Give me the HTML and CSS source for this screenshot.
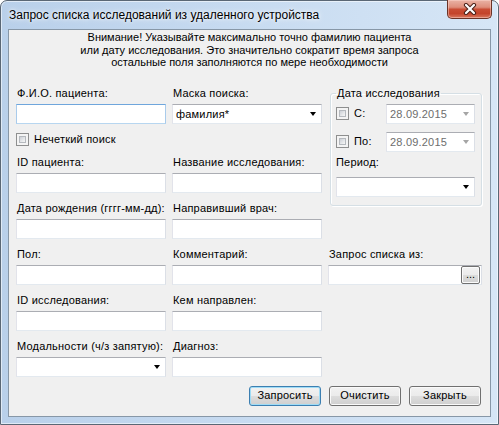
FILE: index.html
```html
<!DOCTYPE html>
<html lang="ru">
<head>
<meta charset="utf-8">
<title>Запрос списка исследований</title>
<link rel="stylesheet" href="styles.css">
</head>
<body>
<div class="window">
  <div class="titlebar">
    <span class="title">Запрос списка исследований из удаленного устройства</span>
    <div class="close">
      <svg width="14" height="12" viewBox="0 0 14 12">
        <path d="M3 2 L11 10 M11 2 L3 10" stroke="#4a2018" stroke-width="4.2" stroke-linecap="round"/>
        <path d="M3 2 L11 10 M11 2 L3 10" stroke="#ffffff" stroke-width="2.2" stroke-linecap="round"/>
      </svg>
    </div>
  </div>
  <div class="client">
    <p class="notice">Внимание! Указывайте максимально точно фамилию пациента<br>или дату исследования. Это значительно сократит время запроса<br>остальные поля заполняются по мере необходимости</p>
    <div class="form">
      <div class="field c1 rA"><span class="lbl">Ф.И.О. пациента:</span><div class="input focus"></div></div>
      <div class="field c2 rA"><span class="lbl">Маска поиска:</span><div class="input select"><span class="val">фамилия*</span><i class="arrow"></i></div></div>

      <fieldset class="group">
        <legend>Дата исследования</legend>
        <div class="daterow">
          <span class="cb"></span><span class="cbl">С:</span>
          <div class="input date"><span class="val">28.09.2015</span><i class="arrow gray"></i></div>
        </div>
        <div class="daterow second">
          <span class="cb"></span><span class="cbl">По:</span>
          <div class="input date"><span class="val">28.09.2015</span><i class="arrow gray"></i></div>
        </div>
        <span class="lbl period">Период:</span>
        <div class="input select"><i class="arrow"></i></div>
      </fieldset>

      <div class="check c1 rB"><span class="cb"></span><span class="cbl">Нечеткий поиск</span></div>

      <div class="field c1 rC"><span class="lbl">ID пациента:</span><div class="input"></div></div>
      <div class="field c2 rC"><span class="lbl">Название исследования:</span><div class="input"></div></div>

      <div class="field c1 rD"><span class="lbl">Дата рождения (гггг-мм-дд):</span><div class="input"></div></div>
      <div class="field c2 rD"><span class="lbl">Направивший врач:</span><div class="input"></div></div>

      <div class="field c1 rE"><span class="lbl">Пол:</span><div class="input"></div></div>
      <div class="field c2 rE"><span class="lbl">Комментарий:</span><div class="input"></div></div>
      <div class="field c3 rE"><span class="lbl">Запрос списка из:</span><div class="input browse"><span class="dots">...</span></div></div>

      <div class="field c1 rF"><span class="lbl">ID исследования:</span><div class="input"></div></div>
      <div class="field c2 rF"><span class="lbl">Кем направлен:</span><div class="input"></div></div>

      <div class="field c1 rG"><span class="lbl">Модальности (ч/з запятую):</span><div class="input select"><i class="arrow"></i></div></div>
      <div class="field c2 rG"><span class="lbl">Диагноз:</span><div class="input"></div></div>

      <div class="buttons">
        <span class="btn default">Запросить</span>
        <span class="btn">Очистить</span>
        <span class="btn">Закрыть</span>
      </div>
    </div>
  </div>
</div>
</body>
</html>
```

FILE: styles.css
```css
html, body {
  margin: 0;
  padding: 0;
  background: #ffffff;
}

body {
  font-family: "Liberation Sans", Arial, sans-serif;
  font-size: 11px;
  color: #000000;
}

.window {
  width: 499px;
  height: 425px;
  box-sizing: border-box;
  border: 1px solid #5a6775;
  border-radius: 7px 7px 0 0;
  background: linear-gradient(to right, #b9d0ea 0%, #c6daf0 45%, #d6e6f6 100%);
  display: flex;
  flex-direction: column;
  padding: 0 7px 7px 7px;
  box-shadow: inset 0 0 0 1px rgba(255, 255, 255, 0.55);
}

.titlebar {
  height: 28px;
  display: flex;
  justify-content: space-between;
  align-items: flex-start;
}

.title {
  font-family: "Liberation Sans", Arial, sans-serif;
  font-size: 12px;
  line-height: 28px;
  padding-left: 1px;
  color: #000;
  text-shadow: 0 0 6px rgba(255, 255, 255, 0.95), 0 0 3px rgba(255, 255, 255, 0.9);
}

.close {
  width: 45px;
  height: 19px;
  margin-top: -1px;
  margin-right: -1px;
  box-sizing: border-box;
  border: 1px solid #6b3327;
  border-top: none;
  border-radius: 0 0 5px 5px;
  background: linear-gradient(to bottom, #eab3a5 0%, #de8e7b 40%, #c94d34 52%, #c4442b 75%, #d9785e 100%);
  box-shadow: inset 0 0 0 1px rgba(255, 220, 210, 0.45);
  display: flex;
  align-items: center;
  justify-content: center;
}

.client {
  flex: 1;
  border: 1px solid #8797a7;
  background: #f0f0f0;
  padding: 1px 0 0 7px;
}

.notice {
  margin: 0 7px 0 0;
  text-align: center;
  line-height: 12.5px;
}

.form {
  margin-top: 18px;
  display: grid;
  grid-template-columns: 150px 150px 154px;
  grid-template-rows: 37px 14px 37px 37px 37px 37px 37px 20px;
  column-gap: 6px;
  row-gap: 9px;
  letter-spacing: 0.2px;
}

.c1 { grid-column: 1; }
.c2 { grid-column: 2; }
.c3 { grid-column: 3; }
.rA { grid-row: 1; }
.rB { grid-row: 2; }
.rC { grid-row: 3; }
.rD { grid-row: 4; }
.rE { grid-row: 5; }
.rF { grid-row: 6; }
.rG { grid-row: 7; }

.field {
  display: flex;
  flex-direction: column;
}

.lbl {
  display: block;
  line-height: 13px;
  height: 13px;
  margin-bottom: 4px;
  padding-left: 1px;
  white-space: nowrap;
}

.input {
  height: 20px;
  box-sizing: border-box;
  background: #ffffff;
  border: 1px solid;
  border-color: #abadb3 #dbdfe6 #e3e9ef #e2e3ea;
  display: flex;
  align-items: center;
}

.input.focus {
  border-color: #6fa6dc #a9cbeb #b7d6f0 #a9cbeb;
}

.select .val,
.date .val {
  padding-left: 3px;
  flex: 1;
}

.arrow {
  margin-left: auto;
  margin-right: 5px;
  width: 0;
  height: 0;
  border-left: 3.5px solid transparent;
  border-right: 3.5px solid transparent;
  border-top: 4px solid #000000;
}

.arrow.gray {
  border-top-color: #a5a5a5;
}

.date {
  width: 89px;
  margin-left: auto;
  color: #6d6d6d;
}

.check {
  display: flex;
  align-items: center;
}

.cb {
  width: 13px;
  height: 13px;
  box-sizing: border-box;
  border: 1px solid #8e8f8f;
  background: #f4f4f4;
  padding: 2px;
  flex: none;
}

.cb::after {
  content: "";
  display: block;
  width: 100%;
  height: 100%;
  box-sizing: border-box;
  border: 1px solid #b5b9be;
  background: linear-gradient(135deg, #cbcfd5 0%, #e6e8ea 60%, #f6f6f6 100%);
}

.cbl {
  margin-left: 5px;
  line-height: 13px;
}

.group {
  grid-column: 3;
  grid-row: 1 / 4;
  align-self: start;
  margin: 0 0 0 2px;
  height: 119px;
  box-sizing: border-box;
  border: 1px solid #d5dfe5;
  border-radius: 3px;
  padding: 4px 6px 0 5px;
  box-shadow: inset 1px 1px 0 #ffffff, 1px 1px 0 #ffffff;
  min-width: 0;
}

.group legend {
  padding: 0 1px;
  line-height: 13px;
}

.daterow {
  display: flex;
  align-items: center;
  height: 20px;
}

.daterow.second {
  margin-top: 8px;
}

.lbl.period {
  margin-top: 4px;
  margin-bottom: 8px;
  padding-left: 0;
}

.browse {
  justify-content: flex-end;
  padding-right: 1px;
}

.dots {
  width: 19px;
  height: 18px;
  box-sizing: border-box;
  border: 1px solid #707070;
  border-radius: 2px;
  background: linear-gradient(to bottom, #f2f2f2 0%, #ebebeb 50%, #dddddd 50%, #cfcfcf 100%);
  box-shadow: inset 0 0 0 1px #fbfbfb;
  font-size: 11px;
  line-height: 14px;
  text-align: center;
  letter-spacing: 0;
}

.buttons {
  grid-column: 1 / -1;
  grid-row: 8;
  display: flex;
  justify-content: flex-end;
  gap: 8px;
  padding-right: 1px;
}

.btn {
  width: 72px;
  height: 20px;
  box-sizing: border-box;
  border: 1px solid #707070;
  border-radius: 3px;
  background: linear-gradient(to bottom, #f2f2f2 0%, #ebebeb 50%, #dddddd 50%, #cfcfcf 100%);
  box-shadow: inset 0 0 0 1px #fafafa;
  display: flex;
  align-items: center;
  justify-content: center;
  line-height: 13px;
}

.btn.default {
  border-color: #3c7fb1;
  box-shadow: inset 0 0 0 1px #9fdcf6;
}
```
